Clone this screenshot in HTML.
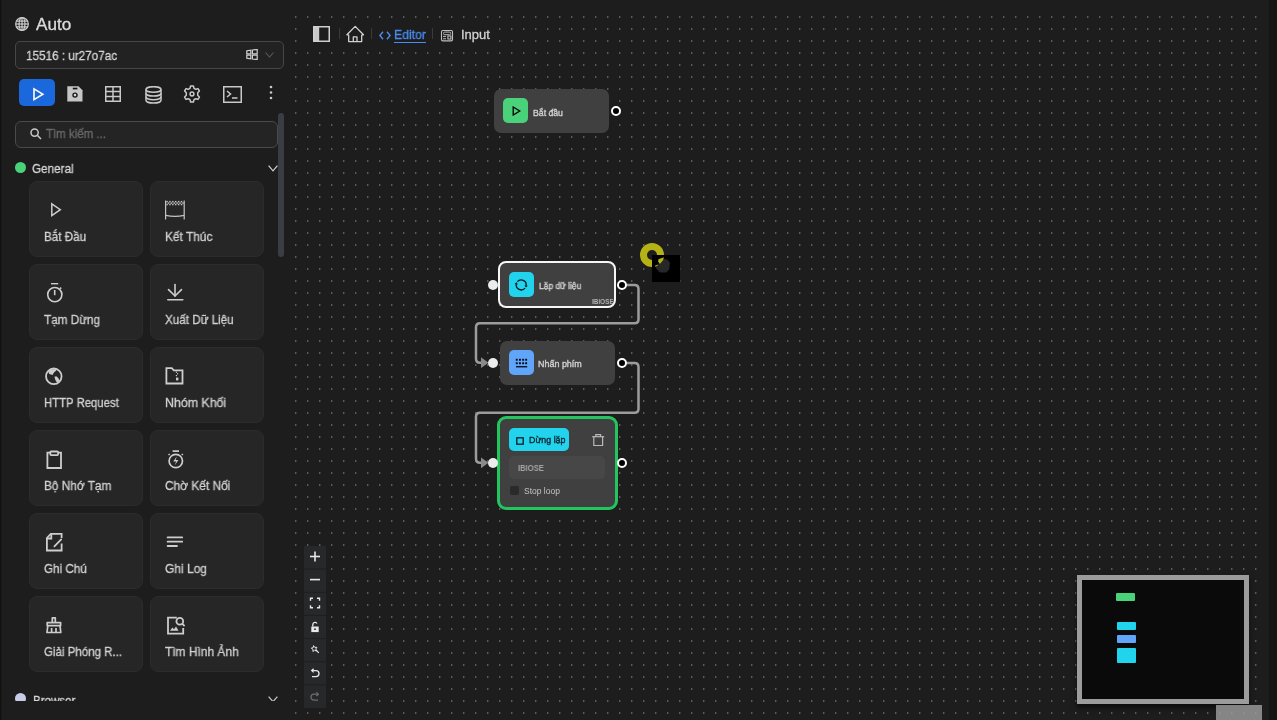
<!DOCTYPE html>
<html><head><meta charset="utf-8">
<style>
*{margin:0;padding:0;box-sizing:border-box}
html,body{width:1277px;height:720px;overflow:hidden;background:#1d1d1d;font-family:"Liberation Sans",sans-serif;position:relative}
.a{position:absolute}
.t{position:absolute;line-height:1;white-space:nowrap;will-change:transform;-webkit-text-stroke:0.3px currentColor}
#lstrip{left:0;top:0;width:2px;height:720px;background:linear-gradient(90deg,#111 0,#111 1px,#191919 1px)}
#rstrip{left:1269px;top:0;width:8px;height:720px;background:#141414}
#dots{left:288px;top:8px;width:978px;height:712px;
 background-image:radial-gradient(ellipse 1.15px 1.15px at 7.75px 9px,#5e5e5e 45%,rgba(94,94,94,0) 100%);
 background-size:12px 12px;background-position:0 0}
.card{position:absolute;width:114px;height:76.3px;background:#262626;border:1px solid #2c2c2c;border-radius:8px}
.card .lbl{position:absolute;will-change:transform;-webkit-text-stroke:0.3px currentColor;left:14px;top:49px;transform-origin:0 0;font-size:12.5px;line-height:1;color:#d2d2d2;white-space:nowrap}
.card svg{position:absolute;left:14px;top:19px}
.tb svg{position:absolute}
.node{position:absolute;background:#404040;border-radius:7px}
.ntxt{position:absolute;will-change:transform;font-size:8.7px;transform-origin:0 0;font-weight:normal;-webkit-text-stroke:0.35px currentColor;color:#d0d0d0;line-height:1;white-space:nowrap}
.hd{position:absolute;border-radius:50%}
.ctl{position:absolute;left:304px;width:22px;height:23px;background:#262626;border-bottom:1px solid #1e1e1e}
.ctl svg{position:absolute;left:5px;top:5px}
</style></head><body>
<div id="lstrip" class="a"></div>
<div id="dots" class="a"></div>
<div class="a" style="left:301px;top:21px;width:194px;height:30px;background:#1d1d1d"></div>
<div id="rstrip" class="a"></div>

<!-- sidebar header -->
<svg class="a" style="left:15px;top:17px" width="14" height="14" viewBox="0 0 14 14" fill="none" stroke="#d0d0d0" stroke-width="1.2"><circle cx="7" cy="7" r="6.3"/><ellipse cx="7" cy="7" rx="3" ry="6.3"/><line x1="7" y1="0.8" x2="7" y2="13.2"/><line x1="0.8" y1="7" x2="13.2" y2="7"/><line x1="1.6" y1="4.1" x2="12.4" y2="4.1"/><line x1="1.6" y1="9.9" x2="12.4" y2="9.9"/></svg>
<div class="t" style="left:36px;top:17px;font-size:16px;color:#dcdcdc;transform:scaleX(1.07);transform-origin:0 0">Auto</div>

<!-- dropdown -->
<div class="a" style="left:15px;top:41px;width:269px;height:28px;background:#222;border:1px solid #474747;border-radius:5px"></div>
<div class="t" style="left:26px;top:48.5px;font-size:13px;color:#d6d6d6;transform:scaleX(0.9);transform-origin:0 0">15516 : ur27o7ac</div>
<svg class="a" style="left:246px;top:49px" width="12" height="11" viewBox="0 0 12 11" fill="none" stroke="#cfcfcf" stroke-width="1.2">
 <path d="M0.8 1.8 L4.8 1.2 V4.8 H0.8 Z"/><path d="M6.4 1 L11.2 0.4 V4.8 H6.4 Z"/><path d="M0.8 6.2 H4.8 V9.8 L0.8 9.2 Z"/><path d="M6.4 6.2 H11.2 V10.6 L6.4 10 Z"/>
</svg>
<svg class="a" style="left:265px;top:52px" width="9" height="6" viewBox="0 0 9 6" fill="none" stroke="#5a5a5a" stroke-width="1.1"><path d="M0.5 0.5 L4.5 5 L8.5 0.5"/></svg>

<!-- toolbar -->
<div class="a" style="left:18.6px;top:78.8px;width:36.9px;height:27.5px;background:#1b68dc;border-radius:5px"></div>
<svg class="a" style="left:32px;top:87px" width="13" height="15" viewBox="0 0 13 15" fill="none" stroke="#fff" stroke-width="1.6" stroke-linejoin="miter"><path d="M2 1.9 L10.9 7.3 L2 12.7 Z"/></svg>
<svg class="a" style="left:67.3px;top:85.5px" width="16" height="16" viewBox="0 0 16 16"><path d="M0.3 0.3 H11.5 L15.5 4.3 V15.4 H0.3 Z" fill="#c6c6c6"/><rect x="5.8" y="1.7" width="4.6" height="1.7" fill="#141414"/><circle cx="8" cy="9.1" r="2.7" fill="#141414"/><circle cx="8" cy="9.1" r="1.3" fill="#d8d8d8"/></svg>
<svg class="a" style="left:105px;top:86px" width="16" height="16" viewBox="0 0 16 16" fill="none" stroke="#c9c9c9" stroke-width="1.5"><rect x="0.75" y="0.75" width="14.5" height="14.5"/><line x1="8" y1="0.75" x2="8" y2="15.25"/><line x1="0.75" y1="5.5" x2="15.25" y2="5.5"/><line x1="0.75" y1="10.5" x2="15.25" y2="10.5"/></svg>
<svg class="a" style="left:145px;top:86px" width="17" height="18" viewBox="0 0 17 18" fill="none" stroke="#c9c9c9" stroke-width="1.5"><ellipse cx="8.5" cy="3.5" rx="7.5" ry="2.8"/><path d="M1 3.5 V14.2 C1 15.8 4.4 17.1 8.5 17.1 C12.6 17.1 16 15.8 16 14.2 V3.5"/><path d="M1 7.2 C1 8.8 4.4 10.1 8.5 10.1 C12.6 10.1 16 8.8 16 7.2"/><path d="M1 10.8 C1 12.4 4.4 13.7 8.5 13.7 C12.6 13.7 16 12.4 16 10.8"/></svg>
<svg class="a" style="left:183.4px;top:85.4px" width="18" height="18" viewBox="0 0 18 18" fill="none" stroke="#c9c9c9" stroke-width="1.5" stroke-linejoin="round"><path d="M7.6 1 H10.4 L11 3.3 L12.8 4.3 L15 3.6 L16.4 6 L14.7 7.7 V10.3 L16.4 12 L15 14.4 L12.8 13.7 L11 14.7 L10.4 17 H7.6 L7 14.7 L5.2 13.7 L3 14.4 L1.6 12 L3.3 10.3 V7.7 L1.6 6 L3 3.6 L5.2 4.3 L7 3.3 Z"/><circle cx="9" cy="9" r="1.9"/></svg>
<svg class="a" style="left:223px;top:86px" width="19" height="17" viewBox="0 0 19 17" fill="none" stroke="#c9c9c9" stroke-width="1.5"><rect x="0.75" y="0.75" width="17.5" height="15.5"/><path d="M4 5 L7.5 8 L4 11"/><line x1="9" y1="12" x2="14.5" y2="12"/></svg>
<svg class="a" style="left:269px;top:85px" width="4" height="15" viewBox="0 0 4 15" fill="#c9c9c9"><circle cx="2" cy="2" r="1.3"/><circle cx="2" cy="7.5" r="1.3"/><circle cx="2" cy="13" r="1.3"/></svg>

<!-- search -->
<div class="a" style="left:15px;top:120.5px;width:263px;height:27.5px;background:#242424;border:1px solid #4a4a4a;border-radius:6px"></div>
<svg class="a" style="left:30px;top:128px" width="12" height="12" viewBox="0 0 12 12" fill="none" stroke="#c9c9c9" stroke-width="1.5"><circle cx="4.6" cy="4.6" r="3.6"/><line x1="7.3" y1="7.3" x2="11" y2="11"/></svg>
<div class="t" style="left:45.5px;top:128px;font-size:12.5px;color:#6a6a6a;transform:scaleX(0.92);transform-origin:0 0">Tìm kiếm ...</div>

<!-- scrollbar -->
<div class="a" style="left:278px;top:113px;width:6px;height:144px;background:#3b3d44;border-radius:3px"></div>

<!-- general -->
<div class="a" style="left:15px;top:162px;width:11px;height:11px;border-radius:50%;background:#4ad27b"></div>
<div class="t" style="left:32px;top:161.5px;font-size:13px;color:#d6d6d6;transform:scaleX(0.9);transform-origin:0 0">General</div>
<svg class="a" style="left:267.5px;top:164.5px" width="11" height="7" viewBox="0 0 11 7" fill="none" stroke="#d0d0d0" stroke-width="1.2"><path d="M0.6 0.6 L5 5.8 L9.4 0.6"/></svg>

<div id="cards">
<div class="card" style="left:29px;top:180.5px"><svg style="left:13.5px;top:17px" width="20" height="20" viewBox="0 0 20 20" fill="none" stroke="#cdcdcd" stroke-width="1.5"><path d="M7.8 4.8 L16.3 10.7 L7.8 16.6 Z"/></svg><div class="lbl" style="transform:scaleX(0.932)">Bắt Đầu</div></div>
<div class="card" style="left:150px;top:180.5px"><svg style="left:13.3px;top:18px" width="22" height="22" viewBox="0 0 22 22" fill="none" stroke="#c4c4c4" stroke-width="1.2"><line x1="1.6" y1="0.6" x2="1.6" y2="19.6"/><line x1="20.2" y1="0.6" x2="20.2" y2="19.6"/><path d="M1.6 15.4 Q11 17.4 20.2 15.4"/><g fill="#c4c4c4" stroke="none"><rect x="2.30" y="0.90" width="1.45" height="1.45"/><rect x="5.20" y="0.90" width="1.45" height="1.45"/><rect x="8.10" y="0.90" width="1.45" height="1.45"/><rect x="11.00" y="0.90" width="1.45" height="1.45"/><rect x="13.90" y="0.90" width="1.45" height="1.45"/><rect x="16.80" y="0.90" width="1.45" height="1.45"/><rect x="3.75" y="2.35" width="1.45" height="1.45"/><rect x="6.65" y="2.35" width="1.45" height="1.45"/><rect x="9.55" y="2.35" width="1.45" height="1.45"/><rect x="12.45" y="2.35" width="1.45" height="1.45"/><rect x="15.35" y="2.35" width="1.45" height="1.45"/><rect x="18.25" y="2.35" width="1.45" height="1.45"/><rect x="2.30" y="3.80" width="1.45" height="1.45"/><rect x="5.20" y="3.80" width="1.45" height="1.45"/><rect x="8.10" y="3.80" width="1.45" height="1.45"/><rect x="11.00" y="3.80" width="1.45" height="1.45"/><rect x="13.90" y="3.80" width="1.45" height="1.45"/><rect x="16.80" y="3.80" width="1.45" height="1.45"/></g></svg><div class="lbl" style="transform:scaleX(0.952)">Kết Thúc</div></div>

<div class="card" style="left:29px;top:263.6px"><svg style="left:13.5px;top:18px" width="20" height="20" viewBox="0 0 20 20" fill="none" stroke="#cdcdcd" stroke-width="1.6"><line x1="7" y1="0.6" x2="14.2" y2="0.6"/><circle cx="10.8" cy="11.6" r="7.1"/><line x1="10.7" y1="7" x2="10.7" y2="12.2"/><line x1="16" y1="5.8" x2="17.2" y2="4.6"/></svg><div class="lbl" style="transform:scaleX(0.939)">Tạm Dừng</div></div>
<div class="card" style="left:150px;top:263.6px"><svg style="left:13px;top:18px" width="20" height="20" viewBox="0 0 20 20" fill="none" stroke="#cdcdcd" stroke-width="1.6" stroke-linecap="round"><line x1="11" y1="1.6" x2="11" y2="13"/><path d="M4.5 6.6 L11 13 L17.5 6.6"/><line x1="3.8" y1="16.7" x2="18.8" y2="16.7"/></svg><div class="lbl" style="transform:scaleX(0.932)">Xuất Dữ Liệu</div></div>

<div class="card" style="left:29px;top:346.7px"><svg style="left:13px;top:18.3px" width="20" height="20" viewBox="0 0 20 20"><circle cx="10.8" cy="10.3" r="7.8" fill="none" stroke="#cdcdcd" stroke-width="1.8"/><path d="M5.4 6 L6.7 3.7 L12.6 2.9 L13.3 4.5 L11 6.4 L9.5 9.1 L6.3 8 Z" fill="#cdcdcd"/><path d="M11.4 10.7 L13.3 10.3 L15.3 11.9 L16.5 14.6 L15.3 16.5 L13.3 15.8 L12.2 13.4 Z" fill="#cdcdcd"/></svg><div class="lbl" style="transform:scaleX(0.907)">HTTP Request</div></div>
<div class="card" style="left:150px;top:346.7px"><svg style="left:14px;top:18.5px" width="20" height="20" viewBox="0 0 20 20" fill="none" stroke="#cdcdcd" stroke-width="1.8"><path d="M1.4 2.2 H6.8 L8.8 4.3 H17.5 V17.5 H1.4 Z"/><rect x="10.8" y="5.6" width="1.2" height="1.2" fill="#cdcdcd" stroke="none"/><rect x="12" y="7.2" width="1.2" height="1.2" fill="#cdcdcd" stroke="none"/><rect x="10.8" y="9" width="1.2" height="1.2" fill="#cdcdcd" stroke="none"/><rect x="11" y="11.6" width="2.4" height="2.8" fill="#cdcdcd" stroke="none"/></svg><div class="lbl" style="transform:scaleX(0.990)">Nhóm Khối</div></div>

<div class="card" style="left:29px;top:429.8px"><svg width="20" height="20" viewBox="0 0 20 20" fill="none" stroke="#cdcdcd" stroke-width="1.8"><path d="M6 2.6 H3.4 V18 H17 V2.6 H14.4"/><rect x="6.3" y="1.5" width="7.8" height="3.6" rx="0.8"/></svg><div class="lbl" style="transform:scaleX(0.947)">Bộ Nhớ Tạm</div></div>
<div class="card" style="left:150px;top:429.8px"><svg width="20" height="20" viewBox="0 0 20 20" fill="none" stroke="#cdcdcd" stroke-width="1.7"><line x1="7.6" y1="1.1" x2="14" y2="1.1"/><circle cx="10.8" cy="11" r="6.7"/><line x1="3.6" y1="4" x2="4.6" y2="5"/><line x1="17.8" y1="4" x2="16.8" y2="5"/><path d="M11.8 6.6 L8.2 11.6 H11.2 L9.6 15.4 L13.4 10 H10.6 Z" fill="#cdcdcd" stroke="none"/></svg><div class="lbl" style="transform:scaleX(0.951)">Chờ Kết Nối</div></div>

<div class="card" style="left:29px;top:512.9px"><svg style="top:17.8px" width="20" height="20" viewBox="0 0 20 20" fill="none" stroke="#cdcdcd" stroke-width="1.8"><path d="M17.6 11.5 V18.5 H2.9 V6 L6.8 1.8 H17.6 V6"/><path d="M2.9 6.5 H7.3 V2.2"/><line x1="10.4" y1="14.4" x2="17.2" y2="7.4" stroke-linecap="round"/></svg><div class="lbl" style="transform:scaleX(0.931)">Ghi Chú</div></div>
<div class="card" style="left:150px;top:512.9px"><svg style="left:13px;top:19.5px" width="20" height="20" viewBox="0 0 20 20" fill="none" stroke="#cdcdcd" stroke-width="1.8" stroke-linecap="round"><line x1="3.6" y1="4.4" x2="18.2" y2="4.4"/><line x1="3.6" y1="8.7" x2="18.2" y2="8.7"/><line x1="3.6" y1="13" x2="13" y2="13"/></svg><div class="lbl" style="transform:scaleX(0.958)">Ghi Log</div></div>

<div class="card" style="left:29px;top:596px"><svg width="20" height="20" viewBox="0 0 20 20" fill="none" stroke="#cdcdcd" stroke-width="1.7" stroke-linejoin="round"><path d="M8.3 6.6 V1.8 H11.3 V6.6"/><path d="M3.2 6.6 H16.6 V9.6 H3.2 Z"/><path d="M3.8 9.6 L3 16.5 H16.8 L16 9.6"/><line x1="7.6" y1="12" x2="7.6" y2="16.5"/><line x1="12" y1="12" x2="12" y2="16.5"/></svg><div class="lbl" style="transform:scaleX(0.921)">Giải Phóng R...</div></div>
<div class="card" style="left:150px;top:596px"><svg style="left:13.5px;top:18px" width="20" height="20" viewBox="0 0 20 20" fill="none" stroke="#cdcdcd" stroke-width="1.8"><path d="M11.8 2.6 H3 V18.6 H18.2 V13"/><circle cx="14.8" cy="6.2" r="3.4"/><line x1="17.2" y1="8.6" x2="19.6" y2="11"/><path d="M5 15.8 L7.4 12.4 L9 14.2 L11 11.6 L13.6 15.8 Z" fill="#cdcdcd" stroke="none"/></svg><div class="lbl" style="transform:scaleX(0.955)">Tìm Hình Ảnh</div></div>
</div>

<!-- browser row (clipped) -->
<div class="a" style="left:0;top:660px;width:288px;height:41px;overflow:hidden">
 <div class="a" style="left:15px;top:33px;width:11px;height:11px;border-radius:50%;background:#c8cce8"></div>
 <div class="t" style="left:32.5px;top:33.5px;font-size:13px;color:#d6d6d6;transform:scaleX(0.89);transform-origin:0 0">Browser</div>
<svg class="a" style="left:267.5px;top:36px" width="11" height="7" viewBox="0 0 11 7" fill="none" stroke="#c9c9c9" stroke-width="1.2"><path d="M0.6 0.6 L5 5.6 L9.4 0.6"/></svg>
</div>

<!-- breadcrumb -->
<svg class="a" style="left:313px;top:26px" width="17" height="16" viewBox="0 0 17 16"><rect x="0" y="0" width="6.2" height="16" fill="#c8c8c8"/><path d="M0.75 0.75 H16.25 V15.25 H0.75 Z" fill="none" stroke="#d0d0d0" stroke-width="1.5"/></svg>
<div class="a" style="left:339px;top:28px;width:1px;height:11px;background:#3a3a3a"></div>
<svg class="a" style="left:346px;top:25px" width="18" height="18" viewBox="0 0 18 18" fill="none" stroke="#d2d2d2" stroke-width="1.3" stroke-linejoin="round"><path d="M2.7 9.8 H0.9 L9.2 1.4 L17.5 9.8 H15.7"/><path d="M2.7 9.8 V16.6 H15.7 V9.8"/><path d="M7.3 16.6 V11.8 H11 V16.6"/></svg>
<div class="a" style="left:371px;top:28px;width:1px;height:11px;background:#3a3a3a"></div>
<svg class="a" style="left:379px;top:31px" width="12" height="9" viewBox="0 0 12 9" fill="none" stroke="#4a8cf0" stroke-width="1.4"><path d="M4 0.8 L0.9 4.5 L4 8.2"/><path d="M8 0.8 L11.1 4.5 L8 8.2"/></svg>
<div class="t" style="left:394px;top:27.8px;font-size:13px;color:#4a8cf0;transform:scaleX(0.94);transform-origin:0 0">Editor</div>
<div class="a" style="left:394px;top:41.5px;width:32px;height:1.5px;background:#4a8cf0"></div>
<div class="a" style="left:432px;top:28px;width:1px;height:11px;background:#3a3a3a"></div>
<svg class="a" style="left:440px;top:29px" width="14" height="13" viewBox="0 0 14 13" fill="none" stroke="#bdbdbd" stroke-width="1.1"><rect x="1.5" y="1.5" width="11" height="10.4" rx="1.3"/><rect x="3.5" y="3.1" width="7.2" height="2.6" rx="1.2" stroke-width="1"/><line x1="3" y1="7.4" x2="6" y2="7.4" stroke-width="1"/><line x1="3" y1="9.8" x2="6" y2="9.8" stroke-width="1"/><rect x="7.9" y="7" width="3" height="3" stroke-width="1.1"/></svg>
<div class="t" style="left:460.5px;top:27.8px;font-size:13px;color:#d2d2d2">Input</div>

<!-- edges -->
<svg class="a" style="left:0;top:0" width="1277" height="720" fill="none" stroke="#9c9c9c" stroke-width="2.5">
 <path d="M627 285 H634.5 Q638.5 285 638.5 289 V319.3 Q638.5 323.3 634.5 323.3 H480 Q476 323.3 476 327.3 V358.7 Q476 362.7 480 362.7 H484"/>
 <path d="M627 363 H634.5 Q638.5 363 638.5 367 V408.7 Q638.5 412.7 634.5 412.7 H480 Q476 412.7 476 416.7 V458.8 Q476 462.8 480 462.8 H484"/>
 <path d="M481 357.3 L488.5 362.7 L481 368.1 Z" fill="#8a8a8a" stroke="none"/>
 <path d="M481 457.4 L488.5 462.8 L481 468.2 Z" fill="#8a8a8a" stroke="none"/>
</svg>

<!-- node 1: Bat dau -->
<div class="node" style="left:494px;top:89px;width:115px;height:44px"></div>
<div class="a" style="left:503px;top:98px;width:25px;height:25px;background:#4ad27b;border-radius:5px"></div>
<svg class="a" style="left:512px;top:106px" width="9" height="10" viewBox="0 0 9 10" fill="none" stroke="#000" stroke-width="1.3"><path d="M1.2 1 L7.8 5 L1.2 9 Z"/></svg>
<div class="ntxt" style="left:532.5px;top:108.5px;transform:scaleX(1.0)">Bắt đầu</div>
<div class="hd" style="left:611px;top:106px;width:10px;height:10px;background:#000;border:2px solid #fff"></div>

<!-- node 2: Lap du lieu -->
<div class="node" style="left:498.3px;top:261.3px;width:118px;height:47px;border:2px solid #f6f6f6;border-radius:8px"></div>
<div class="a" style="left:509px;top:272px;width:25px;height:25px;background:#22d3ee;border-radius:5px"></div>
<svg class="a" style="left:514px;top:278px" width="14" height="14" viewBox="0 0 14 14"><path d="M3.37 3.69 A5 5 0 0 1 12.15 7.60 M11.03 10.11 A5 5 0 0 1 2.25 6.20" fill="none" stroke="#08161c" stroke-width="1.3"/><path d="M13.83 7.83 L11.89 9.48 L10.47 7.36 Z M0.57 5.97 L2.51 4.32 L3.93 6.44 Z" fill="#08161c"/></svg>
<div class="ntxt" style="left:538.5px;top:282px;transform:scaleX(0.97)">Lặp dữ liệu</div>
<div class="t" style="-webkit-text-stroke:0;left:591.5px;top:298px;font-size:7.5px;font-weight:bold;color:#b4b4b4;transform:scaleX(0.85);transform-origin:0 0">IBIOSE</div>
<div class="hd" style="left:487.5px;top:279.5px;width:10px;height:10px;background:#ececec"></div>
<div class="hd" style="left:617px;top:279.5px;width:10px;height:10px;background:#000;border:2px solid #fff"></div>

<!-- node 3: Nhan phim -->
<div class="node" style="left:500px;top:341px;width:115px;height:44px"></div>
<div class="a" style="left:509px;top:350px;width:25px;height:25px;background:#60a5fa;border-radius:5px"></div>
<svg class="a" style="left:514px;top:356px" width="15" height="13" viewBox="0 0 15 13" fill="#020810"><rect x="1.8" y="2.8" width="1.9" height="1.9"/><rect x="5.0" y="2.8" width="1.9" height="1.9"/><rect x="8.2" y="2.8" width="1.9" height="1.9"/><rect x="11.2" y="2.8" width="1.9" height="1.9"/><rect x="1.8" y="6.3" width="1.9" height="1.9"/><rect x="5.0" y="6.3" width="1.9" height="1.9"/><rect x="8.2" y="6.3" width="1.9" height="1.9"/><rect x="11.2" y="6.3" width="1.9" height="1.9"/><rect x="2" y="10.1" width="11.2" height="1.3"/></svg>
<div class="ntxt" style="left:538.3px;top:360px;transform:scaleX(1.03)">Nhấn phím</div>
<div class="hd" style="left:487.5px;top:357.7px;width:10px;height:10px;background:#ececec"></div>
<div class="hd" style="left:617px;top:357.7px;width:10px;height:10px;background:#000;border:2px solid #fff"></div>

<!-- node 4: Dung lap -->
<div class="node" style="left:497px;top:416px;width:121px;height:94px;border:3px solid #22c55e;border-radius:9px"></div>
<div class="a" style="left:509px;top:428px;width:60px;height:23px;background:#22d3ee;border-radius:5px"></div>
<svg class="a" style="left:516px;top:436.5px" width="8" height="8" viewBox="0 0 8 8" fill="none" stroke="#0a1a20" stroke-width="1.3"><rect x="0.8" y="0.8" width="6.4" height="6.4"/></svg>
<div class="ntxt" style="left:528.5px;top:436px;color:#0c2630;transform:scaleX(1.02)">Dừng lặp</div>
<svg class="a" style="left:592px;top:433px" width="13" height="14" viewBox="0 0 13 14" fill="none" stroke="#bababa" stroke-width="1.2"><line x1="0.2" y1="3.7" x2="12.2" y2="3.7"/><path d="M3.8 3.7 V1.6 H8.6 V3.7"/><path d="M1.8 3.7 V12.5 H10.6 V3.7"/></svg>
<div class="a" style="left:509px;top:456px;width:96px;height:23px;background:#474747;border-radius:5px"></div>
<div class="t" style="-webkit-text-stroke:0;left:518.4px;top:464.3px;font-size:8.3px;font-weight:bold;color:#a4a4a4;transform:scaleX(0.92);transform-origin:0 0">IBIOSE</div>
<div class="a" style="left:510px;top:486px;width:9px;height:9px;background:#2a2a2a;border-radius:2px"></div>
<div class="t" style="-webkit-text-stroke:0;left:523.5px;top:486.5px;font-size:8.5px;color:#c4c4c4">Stop loop</div>
<div class="hd" style="left:487.5px;top:457.8px;width:10px;height:10px;background:#ececec"></div>
<div class="hd" style="left:617px;top:457.8px;width:10px;height:10px;background:#000;border:2px solid #fff"></div>

<!-- cursor -->
<div class="hd" style="left:640px;top:242.5px;width:24px;height:24px;border:7px solid #b5b216"></div>
<div class="a" style="left:652px;top:254.5px;width:28px;height:27.5px;background:#000"></div>
<svg class="a" style="left:652px;top:254.5px" width="28" height="28" viewBox="0 0 28 28"><path d="M3.8 11.7 L6.9 9.1 L12.7 3.7 L15.8 5.1 L18 7.7 L17.1 14.4 L14.4 17.5 L7.8 17.5 L4.2 13.5 Z" fill="#272727"/><path d="M6.4 4.2 L11.8 2.2 L11.3 5.1 L7.8 9.1 L6.2 6.6 Z" fill="#b5b216"/><path d="M2.9 10.8 L6 9.5 L5.6 10.8 L3.3 11.7 Z" fill="#b5b216"/></svg>

<!-- controls -->
<div class="a" style="left:304px;top:546px;width:22px;height:162px;background:#27282a"></div>
<svg class="a" style="left:304px;top:546px" width="22" height="162" viewBox="0 0 22 162" fill="none" stroke="#e8e8e8" stroke-width="1.6">
 <g stroke="#1f1f1f" stroke-width="1"><line x1="0" y1="23.1" x2="22" y2="23.1"/><line x1="0" y1="46.3" x2="22" y2="46.3"/><line x1="0" y1="69.4" x2="22" y2="69.4"/><line x1="0" y1="92.6" x2="22" y2="92.6"/><line x1="0" y1="115.7" x2="22" y2="115.7"/><line x1="0" y1="138.9" x2="22" y2="138.9"/></g>
 <line x1="11" y1="5.5" x2="11" y2="15.5"/><line x1="6" y1="10.5" x2="16" y2="10.5"/>
 <line x1="6" y1="33.6" x2="16" y2="33.6"/>
 <path d="M6.5 54.8 V52.3 H9 M13 52.3 H15.5 V54.8 M15.5 59.2 V61.7 H13 M9 61.7 H6.5 V59.2" stroke-width="1.4"/>
 <rect x="7.3" y="80.5" width="7.4" height="5.6" fill="#e8e8e8" stroke="none"/><path d="M8.8 80.5 V78.4 A2.2 2.2 0 0 1 13 77.6" stroke-width="1.3"/><circle cx="11" cy="83.2" r="0.9" fill="#27282a" stroke="none"/>
 <path d="M9.5 99.6 L10.8 101.4 L12.9 101.3 L11.8 103 L12.5 105 L10.5 104.3 L8.9 105.5 L9 103.4 L7.3 102.2 L9.3 101.5 Z" stroke-width="1"/><line x1="12" y1="104" x2="14.8" y2="106.8" stroke-width="1.1"/>
 <path d="M8 124.6 H12 A3 3 0 0 1 12 130.6 H8" stroke-width="1.3"/><path d="M9.6 122.8 L7.7 124.6 L9.6 126.4" stroke-width="1.3"/>
 <path d="M14 148.2 H10 A3 3 0 0 0 10 154.2 H14" stroke="#6c6c6c" stroke-width="1.3"/><path d="M12.4 146.4 L14.3 148.2 L12.4 150" stroke="#6c6c6c" stroke-width="1.3"/>
</svg>

<!-- minimap -->
<div class="a" style="left:1077px;top:574.5px;width:172px;height:129px;background:#0a0a0a;border:5.5px solid #9c9c9c;box-shadow:0 4px 5px rgba(0,0,0,0.55)"></div>
<div class="a" style="left:1115.5px;top:593px;width:19.5px;height:8px;background:#4ad27b;border-radius:1px"></div>
<div class="a" style="left:1116.5px;top:622px;width:19.5px;height:8px;background:#22d3ee;border-radius:1px"></div>
<div class="a" style="left:1116.5px;top:635px;width:19.5px;height:7.5px;background:#60a5fa;border-radius:1px"></div>
<div class="a" style="left:1116.5px;top:648px;width:19.5px;height:15px;background:#22d3ee;border-radius:1px"></div>
<div class="a" style="left:1216px;top:705px;width:46px;height:15px;background:rgba(160,160,160,0.8)"></div>
</body></html>
